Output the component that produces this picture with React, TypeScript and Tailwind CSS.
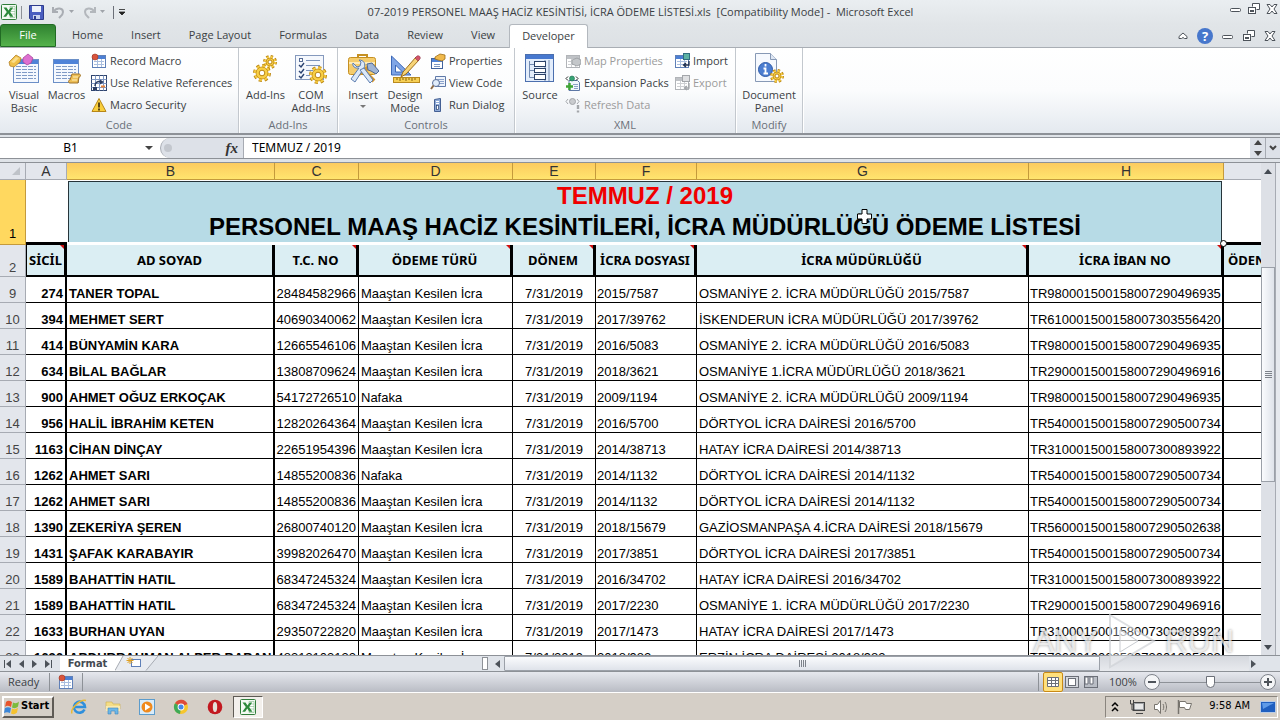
import type { ReactNode } from "react";
import clsx from "clsx";

type Row = {
  n: number;
  sicil: string;
  name: string;
  tc: string;
  type: string;
  file: string;
  office: string;
  iban: string;
};

const ROWS: Row[] = [
  { n: 9, sicil: "274", name: "TANER TOPAL", tc: "28484582966", type: "Maaştan Kesilen İcra", file: "2015/7587", office: "OSMANİYE 2. İCRA MÜDÜRLÜĞÜ 2015/7587", iban: "TR980001500158007290496935" },
  { n: 10, sicil: "394", name: "MEHMET SERT", tc: "40690340062", type: "Maaştan Kesilen İcra", file: "2017/39762", office: "İSKENDERUN İCRA MÜDÜRLÜĞÜ 2017/39762", iban: "TR610001500158007303556420" },
  { n: 11, sicil: "414", name: "BÜNYAMİN KARA", tc: "12665546106", type: "Maaştan Kesilen İcra", file: "2016/5083", office: "OSMANİYE 2. İCRA MÜDÜRLÜĞÜ 2016/5083", iban: "TR980001500158007290496935" },
  { n: 12, sicil: "634", name: "BİLAL BAĞLAR", tc: "13808709624", type: "Maaştan Kesilen İcra", file: "2018/3621", office: "OSMANİYE 1.İCRA MÜDÜRLÜĞÜ 2018/3621", iban: "TR290001500158007290496916" },
  { n: 13, sicil: "900", name: "AHMET OĞUZ ERKOÇAK", tc: "54172726510", type: "Nafaka", file: "2009/1194", office: "OSMANİYE 2. İCRA MÜDÜRLÜĞÜ 2009/1194", iban: "TR980001500158007290496935" },
  { n: 14, sicil: "956", name: "HALİL İBRAHİM KETEN", tc: "12820264364", type: "Maaştan Kesilen İcra", file: "2016/5700", office: "DÖRTYOL İCRA DAİRESİ 2016/5700", iban: "TR540001500158007290500734" },
  { n: 15, sicil: "1163", name: "CİHAN DİNÇAY", tc: "22651954396", type: "Maaştan Kesilen İcra", file: "2014/38713", office: "HATAY İCRA DAİRESİ 2014/38713", iban: "TR310001500158007300893922" },
  { n: 16, sicil: "1262", name: "AHMET SARI", tc: "14855200836", type: "Nafaka", file: "2014/1132", office: "DÖRTYOL İCRA DAİRESİ 2014/1132", iban: "TR540001500158007290500734" },
  { n: 17, sicil: "1262", name: "AHMET SARI", tc: "14855200836", type: "Maaştan Kesilen İcra", file: "2014/1132", office: "DÖRTYOL İCRA DAİRESİ 2014/1132", iban: "TR540001500158007290500734" },
  { n: 18, sicil: "1390", name: "ZEKERİYA ŞEREN", tc: "26800740120", type: "Maaştan Kesilen İcra", file: "2018/15679", office: "GAZİOSMANPAŞA 4.İCRA DAİRESİ 2018/15679", iban: "TR560001500158007290502638" },
  { n: 19, sicil: "1431", name: "ŞAFAK KARABAYIR", tc: "39982026470", type: "Maaştan Kesilen İcra", file: "2017/3851", office: "DÖRTYOL İCRA DAİRESİ 2017/3851", iban: "TR540001500158007290500734" },
  { n: 20, sicil: "1589", name: "BAHATTİN HATIL", tc: "68347245324", type: "Maaştan Kesilen İcra", file: "2016/34702", office: "HATAY İCRA DAİRESİ 2016/34702", iban: "TR310001500158007300893922" },
  { n: 21, sicil: "1589", name: "BAHATTİN HATIL", tc: "68347245324", type: "Maaştan Kesilen İcra", file: "2017/2230", office: "OSMANİYE 1. İCRA MÜDÜRLÜĞÜ 2017/2230", iban: "TR290001500158007290496916" },
  { n: 22, sicil: "1633", name: "BURHAN UYAN", tc: "29350722820", type: "Maaştan Kesilen İcra", file: "2017/1473", office: "HATAY İCRA DAİRESİ 2017/1473", iban: "TR310001500158007300893922" },
  { n: 23, sicil: "1636", name: "ABDURRAHMAN ALPER BABAN", tc: "48313103132", type: "Maaştan Kesilen İcra", file: "2018/982", office: "ERZİN İCRA DAİRESİ 2018/982", iban: "TR730001000253073001005232" },
];

const COLUMNS = ["B", "C", "D", "E", "F", "G", "H"];
const FIELDS = ["AD SOYAD", "T.C. NO", "ÖDEME TÜRÜ", "DÖNEM", "İCRA DOSYASI", "İCRA MÜDÜRLÜĞÜ", "İCRA İBAN NO"];
const TABS = ["Home", "Insert", "Page Layout", "Formulas", "Data", "Review", "View"];

/* ---------- icons ---------- */

function Svg({ w, h = w, children, className }: { w: number; h?: number; children: ReactNode; className?: string }) {
  return (
    <svg width={w} height={h} viewBox={`0 0 ${w} ${h}`} className={clsx("shrink-0", className)} aria-hidden="true">
      {children}
    </svg>
  );
}

function ExcelIcon() {
  return (
    <Svg w={16}>
      <rect x="0.5" y="0.5" width="15" height="15" rx="1" fill="#f3faf3" stroke="#2f7d3a" />
      <path d="M9 2.5h5v11H9z" fill="#fff" stroke="#7fb886" strokeWidth=".6" />
      <path d="M9 5h5M9 7.5h5M9 10h5" stroke="#7fb886" strokeWidth=".6" />
      <path d="M2.5 3.5h3l2 3 2.2-3h2.6L9 8l3.5 4.8H9.4L7.3 9.6l-2.2 3.2H2.3L5.8 8z" fill="#2c8a3b" />
    </Svg>
  );
}

// grid sheet with a blue title strip
function Sheet({ x, y, w, h }: { x: number; y: number; w: number; h: number }) {
  const lines: number[] = [];
  for (let ly = y + 7; ly < y + h - 2; ly += 3) lines.push(ly);
  return (
    <g>
      <rect x={x + 0.5} y={y + 0.5} width={w - 1} height={h - 1} fill="#f4f8fe" stroke="#6b8fc7" />
      <rect x={x + 1} y={y + 1} width={w - 2} height={4} fill="#4f83d8" />
      {lines.map((ly) => (
        <path key={ly} d={`M${x + 3} ${ly}.5H${x + w - 3}`} stroke="#7f9ac6" strokeDasharray="5 1" />
      ))}
    </g>
  );
}

function Gear({ cx, cy, r }: { cx: number; cy: number; r: number }) {
  return (
    <g>
      <circle cx={cx} cy={cy} r={r} fill="none" stroke="#c08c18" strokeWidth="4" strokeDasharray={`${r * 0.42} ${r * 0.365}`} />
      <circle cx={cx} cy={cy} r={r} fill="none" stroke="#f8cf45" strokeWidth="2" strokeDasharray={`${r * 0.42} ${r * 0.365}`} />
      <circle cx={cx} cy={cy} r={r - 1} fill="#f8cf45" stroke="#c08c18" strokeWidth=".8" />
      <circle cx={cx} cy={cy} r={r * 0.4} fill="#fff" stroke="#b98412" strokeWidth="1" />
    </g>
  );
}

function VisualBasicIcon() {
  return (
    <Svg w={32}>
      <Sheet x={5} y={6} w={26} h={24} />
      <path d="M1 9l7-7 5 3-1 4-6 5-4-1z" fill="#efc04a" stroke="#b5832a" strokeWidth=".8" />
      <path d="M15 5l5-4 5 4-2 5-4 2-4-3z" fill="#dd6fd0" stroke="#a9469c" strokeWidth=".8" />
      <path d="M3 9l5-5 3 1-5 5z" fill="#f9dd8d" />
    </Svg>
  );
}

function MacrosIcon() {
  return (
    <Svg w={32}>
      <Sheet x={2} y={6} w={26} h={24} />
      <path d="M21 21h7c2 0 2 3 0 3l-1 6h-8c-2 0-2-3 0-3z" fill="#edbe55" stroke="#a2742a" />
      <path d="M22 24h5M21 27h5" stroke="#fff0bd" />
    </Svg>
  );
}

function AddInsIcon() {
  return (
    <Svg w={32}>
      <Gear cx={20} cy={9} r={5} />
      <Gear cx={12} cy={20} r={7} />
    </Svg>
  );
}

function ComAddInsIcon() {
  return (
    <Svg w={32}>
      <rect x="0.5" y="2.5" width="28" height="24" fill="#f5f8fd" stroke="#8599bd" />
      <rect x="4.5" y="5.5" width="3" height="3" fill="#fff" stroke="#566c95" />
      <path d="M4 12l2 2 3-4M4 18l2 2 3-4M4 23l2 2 3-4" stroke="#2b4372" strokeWidth="1.4" fill="none" />
      <path d="M11 7.5h14M11 12.5h14M11 17.5h7M11 22.5h4" stroke="#7c93bb" />
      <Gear cx={23} cy={22} r={7} />
    </Svg>
  );
}

function ToolboxIcon() {
  return (
    <Svg w={32}>
      <path d="M11 5V2h9v3" fill="none" stroke="#c59022" strokeWidth="2" />
      <rect x="1.5" y="4.5" width="27" height="17" rx="2" fill="#f5cc6c" stroke="#c59022" />
      <path d="M2 10h26" stroke="#fdeab8" strokeWidth="2" />
      <path d="M10 22L24 13M18 19l9 9" stroke="#d2952f" strokeWidth="4" />
      <path d="M20 11l5-1 7 8-3 3-5-3-3-1z" fill="#9fb5d6" stroke="#4d6797" />
      <path d="M6 10l4 4 3-1 1-4-2-2c5 0 7 4 5 8l-9 14-4-3 8-11c-4 1-7-2-6-5z" fill="#dbe8f8" stroke="#5b7caf" />
      <path d="M13 17l4-2 9 12-3 3z" fill="#dbe8f8" stroke="#5b7caf" />
    </Svg>
  );
}

function DesignModeIcon() {
  return (
    <Svg w={32}>
      <path d="M2.5 3v19H22z" fill="#7fa5e6" stroke="#3c68b8" />
      <path d="M6.500 12v7h7z" fill="#fff" stroke="#3c68b8" />
      <rect x="4.5" y="24.500" width="26" height="5" fill="#f6cf55" stroke="#b98a1e" />
      <path d="M8 25v2M11 25v3M14 25v2M17 25v3M20 25v2M23 25v3M26 25v2" stroke="#87620d" />
      <path d="M12 24l2-5L27 4l3 3-13 14z" fill="#f7d477" stroke="#9d6e1a" />
      <path d="M26 5l2-2c2-1 4 1 3 3l-2 2z" fill="#d3546a" stroke="#8d3243" strokeWidth=".6" />
    </Svg>
  );
}

function SourceIcon() {
  return (
    <Svg w={32}>
      <rect x="1.5" y="1.500" width="28" height="27" fill="#e3edfb" stroke="#4b6fae" />
      <rect x="2" y="2" width="27" height="4" fill="#4778cf" />
      <path d="M5.500 8v16.500M5.500 11.500h6M5.500 17.500h6M5.500 24.500h6M21 7v21M25 7v21" fill="none" stroke="#7189b0" />
      <g fill="#fff" stroke="#2c4268">
        <rect x="10.500" y="8.500" width="11" height="5" />
        <rect x="10.500" y="15.500" width="11" height="4" />
        <rect x="10.500" y="21.500" width="11" height="5" />
      </g>
    </Svg>
  );
}

function DocumentPanelIcon() {
  return (
    <Svg w={32}>
      <path d="M2.500.5h15l6 6v22h-21z" fill="#f6f9fe" stroke="#8799b5" />
      <path d="M17.500.5v6h6" fill="#dfe7f3" stroke="#8799b5" />
      <circle cx="12.500" cy="16.500" r="7" fill="#4b7dd0" stroke="#2f5ba8" />
      <path d="M12.500 11v2.500M10.500 15.500h2v5M10.500 20.500h4.500" stroke="#fff" strokeWidth="1.800" fill="none" />
      <Gear cx={24} cy={23} r={5} />
    </Svg>
  );
}

function SmallSheet({ gray, children }: { gray?: boolean; children?: ReactNode }) {
  return (
    <Svg w={16}>
      <rect x="1.500" y="2.500" width="13" height="12" fill="#fff" stroke={gray ? "#b1b4b8" : "#5f80b8"} />
      <rect x="2" y="3" width="12" height="3" fill={gray ? "#bfc2c6" : "#4c7fd4"} />
      <path d="M3 8.500h10M3 11.500h10M6.500 6v8M10.500 6v8" stroke={gray ? "#ced0d3" : "#a9bedf"} />
      {children}
    </Svg>
  );
}

const recordIcon = (
  <SmallSheet>
    <circle cx="4" cy="4" r="3" fill="#d9543c" stroke="#a2341f" strokeWidth=".6" />
  </SmallSheet>
);
const relativeIcon = (
  <Svg w={16}>
    <rect x=".5" y=".5" width="15" height="15" fill="#fff" stroke="#30456f" />
    <path d="M.5 4.500h15M.5 8.500h15M.5 12.500h15M4.500.5v15M8.500.5v15M12.500.5v15" stroke="#7f98c4" />
    <path d="M4 11c0-4 3-5 6-4" fill="none" stroke="#2d3e63" strokeWidth="1.500" />
    <path d="M9 4.500v5l4-2.500z" fill="#2d3e63" />
    <path d="M2 13.500h4" stroke="#2d3e63" strokeWidth="3" />
    <path d="M10 11.500h4" stroke="#e7833a" strokeWidth="2" />
  </Svg>
);
const warningIcon = (
  <Svg w={16}>
    <path d="M8 1.500l7 13H1z" fill="#f9cf3d" stroke="#b78617" strokeLinejoin="round" />
    <path d="M8 5.500v5M8 11.500v2" stroke="#33240a" strokeWidth="1.600" />
  </Svg>
);
const propertiesIcon = (
  <Svg w={16}>
    <rect x="1.500" y="5.500" width="11" height="10" fill="#fff" stroke="#41639e" />
    <rect x="2" y="6" width="10" height="3" fill="#4f83d8" />
    <path d="M4 11.500h6M4 13.500h6" stroke="#7d98c4" />
    <path d="M5 4l5-3 5 1v4l-3 2-4-1-3-1z" fill="#f0b94c" stroke="#9d6d18" strokeWidth=".8" />
  </Svg>
);
const viewCodeIcon = (
  <Svg w={16}>
    <path d="M5.500 1.500h10v10h-10z" fill="#eef3fb" stroke="#5f79a8" />
    <path d="M7 4.500h7M7 6.500h7M9 8.500h5" stroke="#8ba3cc" />
    <circle cx="6" cy="8" r="3.500" fill="#e1edfb" stroke="#5b7099" />
    <path d="M3.500 10.500L1 14" stroke="#8e6a45" strokeWidth="2" />
  </Svg>
);
const runDialogIcon = (
  <Svg w={16}>
    <path d="M4.500 2.500l6-1v13h-6z" fill="#8fabd8" stroke="#435f93" />
    <path d="M6 4.500h3M6 6.500h3" stroke="#fff" />
    <rect x="6.500" y="8.500" width="2" height="4" fill="#fff" stroke="#2a4272" strokeWidth=".7" />
  </Svg>
);
const mapIcon = (
  <SmallSheet gray>
    <path d="M7 7l5-2 4 2v4l-4 2-5-2z" fill="#c4c7ca" stroke="#96999d" strokeWidth=".8" />
  </SmallSheet>
);
const expansionIcon = (
  <Svg w={16}>
    <path d="M4 5.500h8.500l2 2v8H4z" fill="#f3f7fd" stroke="#5d78a6" />
    <path d="M8 9.500h5M9 11.500h4M9 13.500h4" stroke="#8da3c6" />
    <circle cx="7" cy="3.500" r="2.500" fill="#37a474" stroke="#1f6950" strokeWidth=".6" />
    <path d="M3 1.500L1 3.500l2 2M11 1.500l2 2-2 2" fill="none" stroke="#222" />
    <path d="M4.500 8v7M1 11.500h7" stroke="#3fa535" strokeWidth="2.400" />
  </Svg>
);
const refreshIcon = (
  <Svg w={16}>
    <path d="M3 2L1 4.500 3 7M12 2l2 2.500L12 7" fill="none" stroke="#a3a6aa" />
    <circle cx="7.500" cy="4.500" r="3" fill="#c9cbce" stroke="#a3a6aa" />
    <path d="M13 8v4M13 13.500v2" stroke="#a3a6aa" strokeWidth="2.400" />
  </Svg>
);
const importIcon = (
  <SmallSheet>
    <rect x="9.500" y=".5" width="6" height="6" fill="#5cb2a3" stroke="#2f6e80" />
    <path d="M15 8v4h-5M12 10l-2.500 2 2.500 2" fill="none" stroke="#20304f" strokeWidth="1.300" />
  </SmallSheet>
);
const exportIcon = (
  <SmallSheet gray>
    <rect x="8.500" y=".5" width="7" height="6" fill="#dfe0e2" stroke="#a3a6aa" />
    <path d="M15 8v5h-4M13 11l-2.500 2 2.500 2" fill="none" stroke="#a3a6aa" strokeWidth="1.300" />
  </SmallSheet>
);

function WindowButtons() {
  return (
    <>
      <button aria-label="Minimize">
        <Svg w={12}>
          <rect x=".5" y="5.500" width="10" height="3" rx="1" fill="#fff" stroke="#4d535a" />
        </Svg>
      </button>
      <button aria-label="Restore">
        <Svg w={12}>
          <path d="M4.500 3.500v-3h7v6h-3" fill="#fff" stroke="#4d535a" />
          <rect x=".5" y="4.500" width="7" height="6" fill="#fff" stroke="#4d535a" />
          <rect x="2.500" y="7.500" width="3" height="1" fill="#fff" stroke="#4d535a" />
        </Svg>
      </button>
      <button aria-label="Close">
        <Svg w={12}>
          <path d="M1 1.500h3l2 2.500 2-2.500h3L8 6l3 4.500H8L6 8l-2 2.500H1L4 6z" fill="#fff" stroke="#4d535a" />
        </Svg>
      </button>
    </>
  );
}

function Arrow({ dir, className }: { dir: "up" | "down" | "left" | "right"; className?: string }) {
  const d = { up: "M0 6l4-5 4 5z", down: "M0 2l4 5 4-5z", left: "M6 0L1 4l5 4z", right: "M2 0l5 4-5 4z" }[dir];
  return (
    <Svg w={8} className={className}>
      <path d={d} fill="currentColor" />
    </Svg>
  );
}

/* ---------- ribbon ---------- */

function BigButton({ icon, lines, drop, className }: { icon: ReactNode; lines: string[]; drop?: boolean; className: string }) {
  return (
    <button className={clsx("flex flex-col items-center pt-[3px] leading-[13px] whitespace-nowrap", className)}>
      <span className="flex h-[35px] items-start">{icon}</span>
      {lines.map((l) => (
        <span key={l}>{l}</span>
      ))}
      {drop && <span className="mt-1 border-x-3 border-t-3 border-x-transparent border-t-[#777]" />}
    </button>
  );
}

function SmallButton({ icon, label, disabled }: { icon: ReactNode; label: string; disabled?: boolean }) {
  return (
    <button disabled={disabled} className="flex h-[22px] items-center gap-[3px] whitespace-nowrap disabled:text-[#9b9b9b]">
      {icon}
      {label}
    </button>
  );
}

function Group({ label, className, children }: { label: string; className: string; children: ReactNode }) {
  return (
    <section
      aria-label={label}
      className={clsx("flex shrink-0 flex-col border-r border-[#c3c8ce] shadow-[1px_0_0_#fff]", className)}
    >
      <div className="flex flex-1 items-start pt-[2px]">{children}</div>
      <div className="text-center leading-[16px] text-[#6a7079]">{label}</div>
    </section>
  );
}

function Ribbon() {
  return (
    <div className="flex h-[87px] shrink-0 border-b-2 border-[#8d9197] bg-linear-to-b from-white via-[#fbfcfd] to-[#e4e9ef]">
      <Group label="Code" className="w-[239px]">
        <BigButton icon={<VisualBasicIcon />} lines={["Visual", "Basic"]} className="w-[48px]" />
        <BigButton icon={<MacrosIcon />} lines={["Macros"]} className="w-[37px]" />
        <div className="pl-[6px]">
          <SmallButton icon={recordIcon} label="Record Macro" />
          <SmallButton icon={relativeIcon} label="Use Relative References" />
          <SmallButton icon={warningIcon} label="Macro Security" />
        </div>
      </Group>
      <Group label="Add-Ins" className="w-[99px]">
        <BigButton icon={<AddInsIcon />} lines={["Add-Ins"]} className="w-[53px]" />
        <BigButton icon={<ComAddInsIcon />} lines={["COM", "Add-Ins"]} className="w-[38px]" />
      </Group>
      <Group label="Controls" className="w-[177px]">
        <BigButton icon={<ToolboxIcon />} lines={["Insert"]} drop className="w-[50px]" />
        <BigButton icon={<DesignModeIcon />} lines={["Design", "Mode"]} className="w-[34px]" />
        <div className="pl-[8px]">
          <SmallButton icon={propertiesIcon} label="Properties" />
          <SmallButton icon={viewCodeIcon} label="View Code" />
          <SmallButton icon={runDialogIcon} label="Run Dialog" />
        </div>
      </Group>
      <Group label="XML" className="w-[221px]">
        <BigButton icon={<SourceIcon />} lines={["Source"]} className="w-[50px]" />
        <div className="w-[109px]">
          <SmallButton icon={mapIcon} label="Map Properties" disabled />
          <SmallButton icon={expansionIcon} label="Expansion Packs" />
          <SmallButton icon={refreshIcon} label="Refresh Data" disabled />
        </div>
        <div>
          <SmallButton icon={importIcon} label="Import" />
          <SmallButton icon={exportIcon} label="Export" disabled />
        </div>
      </Group>
      <Group label="Modify" className="w-[67px]">
        <BigButton icon={<DocumentPanelIcon />} lines={["Document", "Panel"]} className="w-full" />
      </Group>
    </div>
  );
}

/* ---------- sheet ---------- */

const rowHead = "border-r border-b border-[#a7abb3] bg-[#e3e6ec] text-center align-bottom font-normal text-[#444]";
const cell = "overflow-hidden whitespace-nowrap border-b border-black align-bottom";

function CommentMark() {
  return <span className="absolute top-0 right-0 border-t-4 border-l-4 border-t-[#d01010] border-l-transparent" />;
}

function Worksheet() {
  return (
    <table className="w-full table-fixed border-separate border-spacing-0 font-['Liberation_Sans',Arial,sans-serif] text-[13px] leading-[16px] text-black">
      <colgroup>
        <col className="w-[26px]" />
        <col className="w-[41px]" />
        <col className="w-[208px]" />
        <col className="w-[84px]" />
        <col className="w-[154px]" />
        <col className="w-[83px]" />
        <col className="w-[101px]" />
        <col className="w-[332px]" />
        <col className="w-[195px]" />
        <col />
      </colgroup>
      <thead>
        <tr className="h-[17px] text-[14px] text-[#333]">
          <th className="border-r border-b border-[#a7abb3] bg-[#e3e6ec] p-0">
            <Svg w={10} className="mr-1 ml-auto">
              <path d="M9 1v8H1z" fill="#bfc3c9" />
            </Svg>
          </th>
          <th className="border-r border-b border-[#a7abb3] bg-[#e3e6ec] p-0 font-normal">A</th>
          {COLUMNS.map((c) => (
            <th key={c} className="border-r border-b border-[#c49a3c] bg-linear-to-b from-[#fccb5f] to-[#ffe56e] p-0 font-normal">
              {c}
            </th>
          ))}
          <th className="border-b border-[#a7abb3] bg-[#e3e6ec] p-0" />
        </tr>
      </thead>
      <tbody>
        <tr className="h-[65px]">
          <th className="border-r border-b border-[#c49a3c] bg-[#ffd85f] p-0 pb-[2px] align-bottom font-normal">1</th>
          <td className="border-b-3 border-black" />
          <td colSpan={7} className="relative border-b-3 border-white bg-white p-0">
            <div className="mt-[1px] mr-[2px] ml-[1px] h-[61px] space-y-[3px] border-x border-t border-[#26343a] bg-[#b7dbe6] text-center text-[24px] leading-[28px] font-bold">
              <div className="text-[#f00000]">TEMMUZ / 2019</div>
              <div>PERSONEL MAAŞ HACİZ KESİNTİLERİ, İCRA MÜDÜRLÜĞÜ ÖDEME LİSTESİ</div>
            </div>
            <span className="absolute -right-[3px] -bottom-[5px] z-10 size-[7px] rounded-full border border-black bg-white" />
            {/* cell cursor */}
            <Svg w={15} className="absolute top-[29px] left-[790px]">
              <path d="M5 .5h5V5h4.500v5H10v4.500H5V10H.5V5H5z" fill="#fff" stroke="#000" />
            </Svg>
          </td>
          <td className="border-b-3 border-black" />
        </tr>
        <tr className="h-[32px] font-['Noto_Sans','Open_Sans',sans-serif] text-[13px] font-bold">
          <th className={clsx(rowHead, "p-0 font-['Liberation_Sans']")}>2</th>
          <th className="relative border-r-3 border-b-2 border-l border-black bg-[#dbeef3] p-0 whitespace-nowrap">
            SİCİL
            <CommentMark />
          </th>
          {FIELDS.map((f) => (
            <th key={f} className="relative border-r-3 border-b-2 border-black bg-[#dbeef3] p-0 whitespace-nowrap">
              {f}
              {f !== "AD SOYAD" && <CommentMark />}
            </th>
          ))}
          <th className="overflow-hidden border-b-2 border-black bg-[#dbeef3] p-0 pl-1 text-left whitespace-nowrap">ÖDEN</th>
        </tr>
        {ROWS.map((r) => (
          <tr key={r.n} className="h-[26px]">
            <th className={clsx(rowHead, "p-0")}>{r.n}</th>
            <td className={clsx(cell, "border-r-2 p-0 pr-[2px] text-right font-bold")}>{r.sicil}</td>
            <td className={clsx(cell, "border-r-2 p-0 pl-[2px] font-bold")}>{r.name}</td>
            <td className={clsx(cell, "border-r p-0 pr-[2px] text-right")}>{r.tc}</td>
            <td className={clsx(cell, "border-r p-0 pl-[2px]")}>{r.type}</td>
            <td className={clsx(cell, "border-r p-0 text-center")}>7/31/2019</td>
            <td className={clsx(cell, "border-r p-0 pl-[1px]")}>{r.file}</td>
            <td className={clsx(cell, "border-r p-0 pl-[2px]")}>{r.office}</td>
            <td className={clsx(cell, "border-r-2 p-0 pl-[1px]")}>{r.iban}</td>
            <td className={clsx(cell, "p-0")} />
          </tr>
        ))}
      </tbody>
    </table>
  );
}

function Watermark() {
  return (
    <div className="pointer-events-none absolute right-[46px] bottom-[50px] z-20 flex items-center gap-[8px] font-['Liberation_Sans',Arial,sans-serif] text-[32px] leading-[44px] text-white/70 [text-shadow:0_0_3px_#0006]">
      <span>ANY</span>
      <Svg w={50} h={58}>
        <path d="M3 3l44 26L3 55z" fill="#fff" fillOpacity=".3" stroke="#cfd2d6" strokeOpacity=".7" strokeWidth="2" />
        <path d="M13 18l18 11-18 11z" fill="#fff" fillOpacity=".6" stroke="#c9ccd1" />
      </Svg>
      <span>RUN</span>
    </div>
  );
}

/* ---------- bottom bars ---------- */

function SheetTabs() {
  return (
    <div className="flex h-4 shrink-0 border-t border-[#8d9197] bg-[#e0e4ea] text-[#4d535a]">
      <div className="flex w-[60px] items-center justify-between pr-2 pl-1">
        <button aria-label="First sheet" className="flex items-center"><i className="h-2 w-px bg-current" /><Arrow dir="left" /></button>
        <button aria-label="Previous sheet"><Arrow dir="left" /></button>
        <button aria-label="Next sheet"><Arrow dir="right" /></button>
        <button aria-label="Last sheet" className="flex items-center"><Arrow dir="right" /><i className="h-2 w-px bg-current" /></button>
      </div>
      <button className="w-[55px] bg-white font-['DejaVu_Sans_Condensed','DejaVu_Sans',sans-serif] text-[11px] leading-[14px] font-bold text-[#444a52]">Format</button>
      <button aria-label="Insert worksheet">
        <Svg w={46} h={15}>
          <path d="M0 0h14L6 15H0z" fill="#fff" />
          <path d="M8 0L0 14.500h31L43 0" fill="#e9ecf1" />
          <path d="M8 0L0 14.500M31 14.500L43 0" fill="none" stroke="#a7abb3" />
          <rect x="16.500" y="3.500" width="9" height="7" fill="#fff" stroke="#5f80b8" />
          <path d="M15 1v7M11.500 4.500h7M12.500 2l5 5M17.500 2l-5 5" stroke="#e0a022" />
        </Svg>
      </button>
      <div className="w-[321px]" />
      <div className="my-[1px] mr-[6px] w-[6px] border border-[#8d9197] bg-white" />
      <button aria-label="Scroll left" className="w-[10px]"><Arrow dir="left" /></button>
      <div className="flex flex-1 bg-linear-to-b from-[#d5d8de] to-[#e8eaee]">
        <div className="flex w-[80%] items-center justify-center gap-[1px] rounded-[1px] border border-[#9ba0a8] bg-linear-to-b from-[#fafbfd] to-[#dfe3ea]">
          {[0, 1, 2, 3].map((i) => (
            <i key={i} className="h-[7px] w-px bg-[#7d828a]" />
          ))}
        </div>
      </div>
      <button aria-label="Scroll right" className="mr-[20px] w-[11px]"><Arrow dir="right" /></button>
    </div>
  );
}

function StatusBar() {
  return (
    <div className="flex h-[22px] shrink-0 items-center border-t border-b border-t-[#8d9197] border-b-white bg-linear-to-b from-[#e6e8ee] to-[#b9bcc4] pl-2">
      <span className="w-[41px]">Ready</span>
      <i className="h-[18px] w-px bg-[#8d9197]" />
      <button aria-label="Record macro" className="px-[8px]">{recordIcon}</button>
      <i className="h-[18px] w-px bg-[#8d9197]" />
      <div className="flex-1" />
      <i className="mr-1 h-[18px] w-px bg-[#8d9197]" />
      <button aria-label="Normal view" className="rounded-xs border border-[#c98a16] bg-[#ffe07c] p-[2px]">
        <Svg w={14}>
          <path d="M1.500 2.500h11v9h-11zM1.500 5.500h11M1.500 8.500h11M5.500 2.500v9M9.500 2.500v9" fill="#fff" stroke="#6b6f78" />
        </Svg>
      </button>
      <button aria-label="Page layout view" className="ml-[2px]">
        <Svg w={14}>
          <rect x=".5" y="1.500" width="13" height="11" fill="#d5d8de" stroke="#6b6f78" />
          <rect x="3.500" y="3.500" width="7" height="7" fill="#fff" stroke="#6b6f78" />
        </Svg>
      </button>
      <button aria-label="Page break preview" className="ml-[5px]">
        <Svg w={14}>
          <rect x=".5" y="1.500" width="13" height="11" fill="#b9bdc5" stroke="#6b6f78" />
          <path d="M1 2h3v7H1zM6 2h3v7H6z" fill="#fff" stroke="#6b6f78" />
        </Svg>
      </button>
      <button className="ml-[11px] w-[35px] text-left">100%</button>
      <button aria-label="Zoom out">
        <Svg w={16}>
          <circle cx="8" cy="8" r="7.500" fill="#f4f5f7" stroke="#7d828a" />
          <path d="M4 8h8" stroke="#4d535a" strokeWidth="2" />
        </Svg>
      </button>
      <input
        type="range"
        aria-label="Zoom"
        defaultValue={50}
        className="h-[14px] w-[100px] appearance-none bg-[linear-gradient(#8d9197,#8d9197)] bg-[length:100%_1px] bg-center bg-no-repeat [&::-webkit-slider-thumb]:h-[12px] [&::-webkit-slider-thumb]:w-[9px] [&::-webkit-slider-thumb]:appearance-none [&::-webkit-slider-thumb]:rounded-b-full [&::-webkit-slider-thumb]:border [&::-webkit-slider-thumb]:border-[#6b6f78] [&::-webkit-slider-thumb]:bg-white"
      />
      <button aria-label="Zoom in" className="mr-[4px]">
        <Svg w={16}>
          <circle cx="8" cy="8" r="7.500" fill="#f4f5f7" stroke="#7d828a" />
          <path d="M4 8h8M8 4v8" stroke="#4d535a" strokeWidth="2" />
        </Svg>
      </button>
    </div>
  );
}

function Taskbar() {
  return (
    <footer className="flex h-[27px] shrink-0 items-center bg-[#d5cfc7] pl-[2px] text-black">
      <button className="flex h-[22px] w-[52px] items-center gap-[1px] border-2 border-t-white border-r-[#5f5b55] border-b-[#5f5b55] border-l-white font-['DejaVu_Sans_Condensed','DejaVu_Sans',sans-serif] text-[11px] font-bold">
        <Svg w={16}>
          <path d="M2 3c2-2 4-1 6 0L7 8C5 7 3 6 1 8z" fill="#e8542b" />
          <path d="M9 3.500c2 1 4 1 6-1l-1 5c-2 2-4 2-6 1z" fill="#7cbb3b" />
          <path d="M1 9c2-1 4-1 6 0l-1 5c-2-1-4-1-6 0z" fill="#3b86d8" />
          <path d="M8 9.500c2 1 4 1 6-1l-1 5c-2 2-4 2-6 1z" fill="#f5c12e" />
        </Svg>
        Start
      </button>
      <nav className="flex flex-1 items-center gap-[18px] pl-[17px]">
        <button aria-label="Internet Explorer">
          <Svg w={16}>
            <path d="M13.500 10.500A5.500 5.500 0 1 1 14 8H4" fill="none" stroke="#2f8fdc" strokeWidth="2.600" />
            <path d="M1 14.500C-1 10 9 0 15 1.500" fill="none" stroke="#e9b935" strokeWidth="1.500" />
          </Svg>
        </button>
        <button aria-label="Explorer">
          <Svg w={16}>
            <path d="M1 3h6l1 2h7v5H1z" fill="#f4dd86" stroke="#cfae4a" strokeWidth=".6" />
            <path d="M1 7h14v5H1z" fill="#f9eab1" />
            <path d="M3 15V9h10v6h-3v-3H6v3z" fill="#6cb7e8" stroke="#3d86bd" strokeWidth=".6" />
          </Svg>
        </button>
        <button aria-label="Media Player">
          <Svg w={16}>
            <rect x=".5" y=".5" width="15" height="15" fill="#d9ecfa" stroke="#5c9ccc" />
            <circle cx="8" cy="8" r="5.500" fill="#f08a1d" />
            <path d="M6 4.500l5.500 3.500L6 11.500z" fill="#fff" />
          </Svg>
        </button>
        <button aria-label="Chrome">
          <Svg w={16}>
            <circle cx="8" cy="8" r="7" fill="#f6c62c" />
            <path d="M8 8L2 4.300A7 7 0 0 1 14.500 5z" fill="#dd4b3a" />
            <path d="M8 8L2 4.300A7 7 0 0 0 7 15z" fill="#3faa57" />
            <circle cx="8" cy="8" r="3.400" fill="#fff" />
            <circle cx="8" cy="8" r="2.500" fill="#4588e8" />
          </Svg>
        </button>
        <button aria-label="Opera">
          <Svg w={16}>
            <circle cx="8" cy="8" r="7.300" fill="#c2181f" />
            <ellipse cx="8" cy="8" rx="2.200" ry="5" fill="#e5dfd8" />
          </Svg>
        </button>
        <button aria-label="Excel" className="-ml-[8px] flex h-[22px] w-[30px] items-center justify-center border border-t-[#5f5b55] border-r-white border-b-white border-l-[#5f5b55] bg-[#f3f0ec]">
          <ExcelIcon />
        </button>
      </nav>
      <div className="mr-[2px] flex h-[22px] items-center border border-t-[#8a857e] border-r-white border-b-white border-l-[#8a857e] pl-[5px]">
        <button aria-label="Show hidden icons">
          <Svg w={8} h={12}>
            <path d="M1 5l3-3 3 3M1 10l3-3 3 3" fill="none" stroke="#000" strokeWidth="1.500" />
          </Svg>
        </button>
        <Svg w={16} className="ml-[10px]">
          <rect x="4.500" y="3.500" width="11" height="8" fill="#9fa2a6" stroke="#444" />
          <path d="M7 14.500h7M1.500 1v4h3V1M3 5v6h3" fill="none" stroke="#444" />
          <rect x="6" y="5" width="8" height="5" fill="#e8e8e8" />
        </Svg>
        <Svg w={16} className="ml-[8px]">
          <path d="M1.500 5.500h3l3-4v13l-3-4h-3z" fill="#fff" stroke="#77736d" />
          <path d="M10 5c1 2 1 4 0 6M12 3c2 3 2 7 0 10" fill="none" stroke="#77736d" />
        </Svg>
        <Svg w={16} className="ml-[8px]">
          <path d="M1.500 1v14" stroke="#77736d" strokeWidth="1.500" />
          <path d="M2.500 2.500h6l1 2h5l-2 6h-4l-1-2h-5z" fill="#fff" stroke="#77736d" />
        </Svg>
        <span className="ml-[16px] font-['DejaVu_Sans_Condensed','Noto_Sans',sans-serif] text-[11px]">9:58 AM</span>
        <Svg w={16} className="mr-[1px] ml-[10px]">
          <rect x=".5" y="2.500" width="15" height="11" fill="#1f5fc0" stroke="#b9cbe4" />
          <path d="M2 4h12L3 10z" fill="#5f9be8" />
        </Svg>
      </div>
    </footer>
  );
}

export default function App() {
  return (
    <div className="relative flex h-screen flex-col overflow-hidden bg-[#dfe3e8] font-['Open_Sans','Noto_Sans',sans-serif] text-[11px] text-[#3b3f44]">
      {/* Title bar */}
      <header className="flex h-6 shrink-0 items-center bg-linear-to-b from-[#eaeef1] to-[#e1e5e8] pl-[1px]">
        <div className="flex w-[127px] shrink-0 items-center">
          <ExcelIcon />
          <i className="mr-[7px] ml-[4px] h-[13px] w-px bg-[#8d9197]" />
          <button aria-label="Save">
            <Svg w={15}>
              <path d="M.5.5h14v14h-13l-1-1z" fill="#4a5ec0" stroke="#2e3c8d" />
              <path d="M3 1h9v6H3z" fill="#eef2fb" />
              <path d="M4 10h7v4H4z" fill="#c9d2ee" />
              <path d="M5 11h2v3H5z" fill="#2e3c8d" />
            </Svg>
          </button>
          <button aria-label="Undo" className="ml-[8px]">
            <Svg w={13}>
              <path d="M1 1v5h5M1.500 5.500C5 1 11 2 11 6c0 3-2 4-4 6" fill="none" stroke="#a9adb3" strokeWidth="2" />
            </Svg>
          </button>
          <Svg w={5} h={4} className="ml-[4px]"><path d="M0 0h5L2.500 3z" fill="#a0a4aa" /></Svg>
          <button aria-label="Redo" className="ml-[9px]">
            <Svg w={13}>
              <path d="M12 1v5H7M11.500 5.500C8 1 2 2 2 6c0 3 2 4 4 6" fill="none" stroke="#b3b7bc" strokeWidth="2" />
            </Svg>
          </button>
          <Svg w={5} h={4} className="ml-[4px]"><path d="M0 0h5L2.500 3z" fill="#a0a4aa" /></Svg>
          <i className="mr-[4px] ml-[8px] h-[13px] w-px bg-[#6b6f78]" />
          <button aria-label="Customize toolbar">
            <Svg w={8}><path d="M1 1.500h6M1 4h6L4 7z" fill="#222" stroke="#222" strokeWidth=".8" /></Svg>
          </button>
        </div>
        <h1 className="flex-1 text-center whitespace-pre">
          07-2019 PERSONEL MAAŞ HACİZ KESİNTİSİ, İCRA ÖDEME LİSTESİ.xls  [Compatibility Mode] -  Microsoft Excel
        </h1>
        <div className="flex w-[127px] items-center justify-end gap-[6px] pr-[2px] pb-[6px]">
          <WindowButtons />
        </div>
      </header>

      {/* Ribbon tabs */}
      <nav className="flex h-6 shrink-0 border-b border-[#a9aeb4] bg-linear-to-b from-[#e1e5e8] to-[#dde1e5]">
        <button className="mr-[2px] w-[56px] rounded-t-[3px] border border-[#216b24] bg-linear-to-b from-[#2f8231] to-[#55b24b] text-white">File</button>
        {TABS.map((t) => (
          <button key={t} className="px-[14px]">{t}</button>
        ))}
        <button className="-mb-px rounded-t-[3px] border border-b-0 border-[#b3b8be] bg-white px-[12px]">Developer</button>
        <div className="flex flex-1 items-center justify-end gap-[9px] pr-[4px]">
          <button aria-label="Minimize ribbon">
            <Svg w={10}><path d="M1 7.500v-2L5 2l4 3.500v2H6.500L5 6.500l-1.500 1z" fill="#fff" stroke="#4d535a" /></Svg>
          </button>
          <button aria-label="Help" className="size-[16px] rounded-full bg-[#4777cc] text-[13px] leading-[16px] font-bold text-white">?</button>
          <WindowButtons />
        </div>
      </nav>

      <Ribbon />

      {/* Formula bar */}
      <div className="mt-[2px] flex h-[22px] shrink-0 border-y border-[#8d9197] bg-white font-['Noto_Sans','Open_Sans',sans-serif] text-[12px] text-black">
        <input aria-label="Name Box" defaultValue="B1" className="w-[141px] text-center outline-none" />
        <button aria-label="Names" className="w-[19px] pl-[4px]"><Svg w={8} h={5}><path d="M0 0h8L4 4z" fill="#444" /></Svg></button>
        <div className="flex w-[84px] items-center justify-between rounded-l-full border-x border-[#a7abb3] bg-[#dde1e8] pr-[5px] pl-[3px]">
          <i className="size-2 rounded-full bg-[#c3c7ce]" />
          <button aria-label="Insert function" className="font-['Liberation_Serif',serif] text-[15px] leading-4 font-bold text-[#333] italic">fx</button>
        </div>
        <input aria-label="Formula" defaultValue="TEMMUZ / 2019" className="min-w-0 flex-1 pl-2 outline-none" />
        <div className="flex w-[15px] flex-col items-center justify-between bg-[#dde1e8] py-[1px] text-[#444]">
          <Arrow dir="up" />
          <Arrow dir="down" />
        </div>
        <button aria-label="Expand formula bar" className="flex w-[15px] items-center justify-center border-l border-[#a7abb3] bg-[#dde1e8]">
          <Svg w={8}><path d="M1 2l3 3 3-3" fill="none" stroke="#444" strokeWidth="2" /></Svg>
        </button>
      </div>

      {/* Sheet */}
      <main className="mt-[3px] flex min-h-0 flex-1 border-t border-[#8d9197]">
        <div className="min-w-0 flex-1 overflow-hidden bg-white">
          <Worksheet />
        </div>
        <div className="flex w-[15px] flex-col items-center border-r border-[#a7abb3] bg-[#dde0e6] text-[#444a52]">
          <button aria-label="Scroll up" className="flex h-[17px] items-center"><Arrow dir="up" /></button>
          <div className="flex w-full flex-1 flex-col">
            <div className="basis-[19%]" />
            <div className="flex basis-[47%] flex-col items-center justify-center gap-[1px] border border-[#9ba0a8] bg-linear-to-r from-[#fafbfd] to-[#dfe3ea]">
              {[0, 1, 2, 3].map((i) => (
                <i key={i} className="h-px w-[7px] bg-[#7d828a]" />
              ))}
            </div>
          </div>
          <button aria-label="Scroll down" className="flex h-[17px] items-center"><Arrow dir="down" /></button>
        </div>
        <div className="w-[4px] bg-[#e6e9ee]" />
      </main>

      <SheetTabs />
      <StatusBar />
      <Taskbar />
      <Watermark />
    </div>
  );
}
